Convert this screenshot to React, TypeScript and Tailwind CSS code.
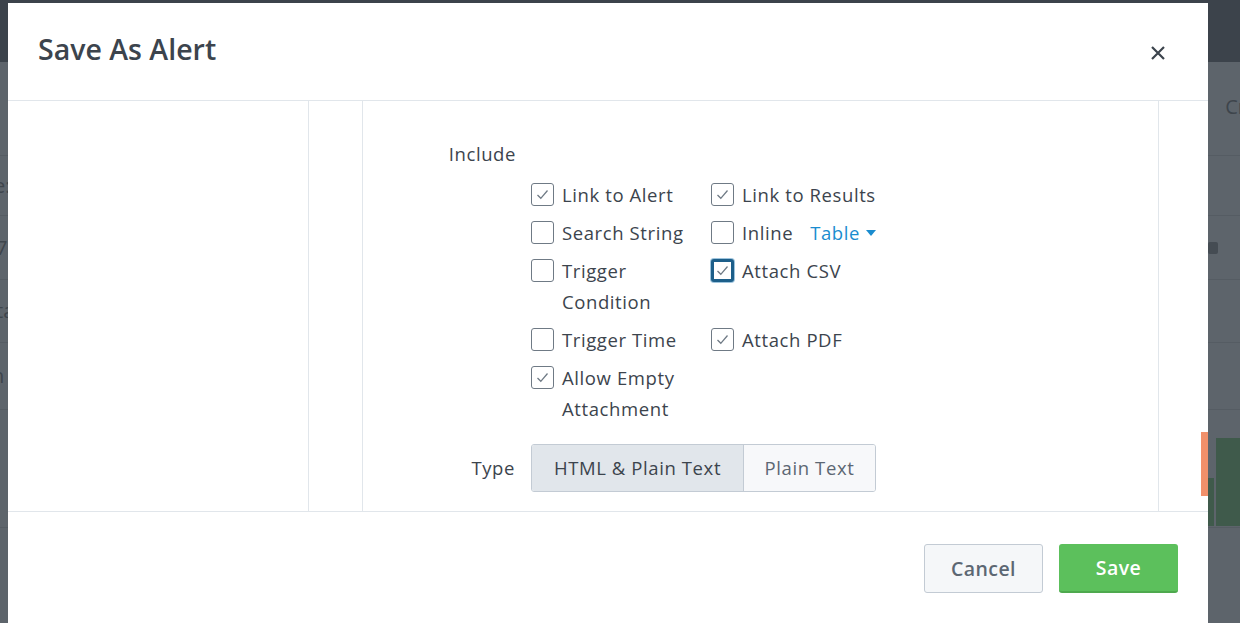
import { useState } from 'react';

type Opt = { id: string; label: string[]; checked: boolean; focus?: boolean; extra?: boolean };

const colOne: Opt[] = [
  { id: 'linkAlert', label: ['Link to Alert'], checked: true },
  { id: 'search', label: ['Search String'], checked: false },
  { id: 'cond', label: ['Trigger', 'Condition'], checked: false },
  { id: 'time', label: ['Trigger Time'], checked: false },
  { id: 'empty', label: ['Allow Empty', 'Attachment'], checked: true },
];

const colTwo: Opt[] = [
  { id: 'linkResults', label: ['Link to Results'], checked: true },
  { id: 'inline', label: ['Inline'], checked: false, extra: true },
  { id: 'csv', label: ['Attach CSV'], checked: true, focus: true },
  { id: 'pdf', label: ['Attach PDF'], checked: true },
];

function Box({ checked, focus, onClick }: { checked: boolean; focus?: boolean; onClick: () => void }) {
  return (
    <button
      onClick={onClick}
      className={`mt-[4px] flex h-[23px] w-[23px] shrink-0 items-center justify-center rounded-[3px] bg-white ${
        focus ? 'border-[3px] border-[#1d5f8a] shadow-[0_0_0_1px_#9ec4dd]' : 'border border-[#6f7a85]'
      }`}
    >
      {checked ? (
        <svg width="13" height="11" viewBox="0 0 13 11" fill="none">
          <path d="M1.5 6 L4.8 9.3 L11.5 1.5" stroke="#6f7a85" strokeWidth="1.3" />
        </svg>
      ) : null}
    </button>
  );
}

function Row({ opt, value, toggle }: { opt: Opt; value: boolean; toggle: () => void }) {
  return (
    <div className="flex items-start gap-[8px]">
      <Box checked={value} focus={opt.focus} onClick={toggle} />
      <div className="whitespace-nowrap text-[18.5px] leading-[31px] tracking-[0.6px] text-[#3c444d]">
        {opt.label.map((l) => (
          <div key={l}>{l}</div>
        ))}
      </div>
      {opt.extra ? (
        <div className="ml-[9px] flex items-center gap-[6px] text-[18.5px] leading-[31px] tracking-[0.6px] text-[#1a8ccf]">
          Table
          <svg width="10" height="6" viewBox="0 0 10 6">
            <path d="M0 0 H10 L5 6 Z" fill="#1a8ccf" />
          </svg>
        </div>
      ) : null}
    </div>
  );
}

export default function App() {
  const [vals, setVals] = useState<Record<string, boolean>>(
    Object.fromEntries([...colOne, ...colTwo].map((o) => [o.id, o.checked]))
  );
  const [type, setType] = useState<'html' | 'plain'>('html');
  const toggle = (id: string) => setVals((v) => ({ ...v, [id]: !v[id] }));

  return (
    <div
      className="relative h-[623px] w-[1240px] overflow-hidden bg-[#5d646b]"
      style={{ fontFamily: '"Open Sans", Lato, sans-serif' }}
    >
      {/* page behind the dialog */}
      <div className="flex h-full flex-col">
        <div className="h-[62px] shrink-0 bg-[#3c434b]" />
        <div className="flex h-[94px] shrink-0 items-start justify-end border-b border-[#555c63] pt-[30px] text-[20px] text-[#3e454c]">
          <span className="mr-[-6px]">Cr</span>
        </div>
        <div className="flex h-[60px] shrink-0 items-center border-b border-[#555c63] text-[20px] text-[#3e454c]">
          <span className="ml-[-6px]">e:</span>
        </div>
        <div className="flex h-[64px] shrink-0 items-center justify-between border-b border-[#555c63] text-[20px] text-[#3e454c]">
          <span className="ml-[-4px]">7</span>
          <span className="mr-[22px] h-[12px] w-[10px] rounded-[2px] bg-[#454c53]" />
        </div>
        <div className="flex h-[63px] shrink-0 items-center border-b border-[#555c63] text-[20px] text-[#3e454c]">
          <span className="ml-[-4px]">ta</span>
        </div>
        <div className="flex h-[67px] shrink-0 items-center border-b border-[#555c63] text-[20px] text-[#3e454c]">
          <span className="ml-[-8px]">n</span>
        </div>
        <div className="flex h-[118px] shrink-0 justify-end border-b border-[#555c63]">
          <div className="mt-[68px] mb-[1px] w-[6px] bg-[#3f5a4b]" />
          <div className="ml-[2px] mt-[28px] mb-[1px] w-[24px] bg-[#3f5a4b]" />
        </div>
      </div>

      {/* dialog */}
      <div className="absolute left-[8px] top-[3px] flex w-[1200px] flex-col bg-white">
        <div className="flex h-[98px] items-center justify-between border-b border-[#e1e6eb] pl-[30px] pr-[42px]">
          <h2 className="mt-[-4px] text-[28.5px] font-semibold text-[#3c444d]">Save As Alert</h2>
          <button className="mt-[2px] text-[#3c444d]">
            <svg width="16" height="16" viewBox="0 0 16 16">
              <path d="M2 2 L14 14 M14 2 L2 14" stroke="#3c444d" strokeWidth="2.2" />
            </svg>
          </button>
        </div>

        <div className="flex h-[411px] border-b border-[#e1e6eb]">
          <div className="w-[301px] border-r border-[#e1e6eb]" />
          <div className="w-[54px] border-r border-[#e1e6eb]" />
          <div className="flex w-[796px] flex-col border-r border-[#e1e6eb] pt-[37px]">
            <div className="flex">
              <div className="w-[153px] text-right text-[18.5px] leading-[31px] tracking-[0.6px] text-[#3c444d]">Include</div>
            </div>
            <div className="ml-[168px] mt-[10px] flex">
              <div className="flex w-[180px] flex-col gap-[7px]">
                {colOne.map((o) => (
                  <Row key={o.id} opt={o} value={vals[o.id]} toggle={() => toggle(o.id)} />
                ))}
              </div>
              <div className="flex flex-col gap-[7px]">
                {colTwo.map((o) => (
                  <div key={o.id} className={o.id === 'pdf' ? 'mt-[31px]' : ''}>
                    <Row opt={o} value={vals[o.id]} toggle={() => toggle(o.id)} />
                  </div>
                ))}
              </div>
            </div>
            <div className="mt-[20px] flex items-center gap-[16px]">
              <div className="w-[152px] text-right text-[18.5px] tracking-[0.6px] text-[#3c444d]">Type</div>
              <div className="flex h-[48px] overflow-hidden rounded-[3px] border border-[#c3cbd4] text-[18.5px] tracking-[0.6px]">
                <button
                  onClick={() => setType('html')}
                  className={`w-[212px] border-r border-[#c3cbd4] ${type === 'html' ? 'bg-[#e1e6eb] text-[#3c444d]' : 'bg-[#f7f8fa] text-[#5c6773]'}`}
                >
                  HTML &amp; Plain Text
                </button>
                <button
                  onClick={() => setType('plain')}
                  className={`w-[131px] ${type === 'plain' ? 'bg-[#e1e6eb] text-[#3c444d]' : 'bg-[#f7f8fa] text-[#5c6773]'}`}
                >
                  Plain Text
                </button>
              </div>
            </div>
          </div>
          <div className="flex-1" />
        </div>

        <div className="flex h-[130px] justify-end gap-[16px] pr-[30px] pt-[32px]">
          <button className="h-[49px] w-[119px] rounded-[3px] border border-[#c3cbd4] bg-[#f5f7f9] text-[19.5px] font-semibold tracking-[0.4px] text-[#5c6773]">
            Cancel
          </button>
          <button className="h-[49px] w-[119px] rounded-[3px] border-b-2 border-[#4ea94e] bg-[#5cc05c] text-[19.5px] font-semibold tracking-[0.4px] text-white">
            Save
          </button>
        </div>
      </div>

      {/* accent marker on the dialog edge */}
      <div className="absolute left-[1201px] top-[432px] h-[64px] w-[7px] bg-[#f1906a]" />
    </div>
  );
}
